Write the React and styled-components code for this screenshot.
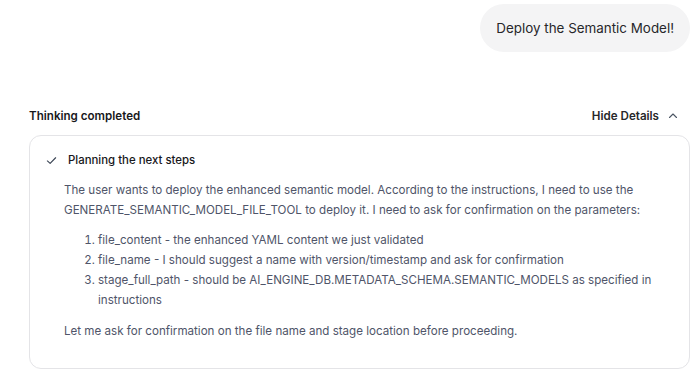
import React from 'react'
import styled, { createGlobalStyle } from 'styled-components'

const GlobalStyle = createGlobalStyle`
    body {
        margin: 0;
        background: #ffffff;
        font-family: Inter, "Noto Sans", sans-serif;
    }
`

const steps = [
    'file_content - the enhanced YAML content we just validated',
    'file_name - I should suggest a name with version/timestamp and ask for confirmation',
    'stage_full_path - should be AI_ENGINE_DB.METADATA_SCHEMA.SEMANTIC_MODELS as specified in instructions',
]

function CheckIcon() {
    return (
        <svg width="11" height="11" viewBox="0 0 12 12" fill="none">
            <path d="M1.5 6.5 L4.5 9.2 L10.5 3" stroke="#374151" strokeWidth="1.2" strokeLinecap="round" strokeLinejoin="round" />
        </svg>
    )
}

function ChevronUp() {
    return (
        <svg width="10" height="10" viewBox="0 0 10 10" fill="none">
            <path d="M1.5 6.5 L5 3 L8.5 6.5" stroke="#4b5563" strokeWidth="1.1" strokeLinecap="round" strokeLinejoin="round" />
        </svg>
    )
}

function App() {
    return (
        <Page>
            <GlobalStyle />
            <UserRow>
                <Bubble>Deploy the Semantic Model!</Bubble>
            </UserRow>
            <ThinkingHeader>
                <HeaderTitle>Thinking completed</HeaderTitle>
                <Toggle>
                    Hide Details
                    <ChevronUp />
                </Toggle>
            </ThinkingHeader>
            <Card>
                <StepTitle>
                    <CheckIcon />
                    <span>Planning the next steps</span>
                </StepTitle>
                <Body>
                    <Para>
                        The user wants to deploy the enhanced semantic model. According to the instructions, I need to use the
                        GENERATE_SEMANTIC_MODEL_FILE_TOOL to deploy it. I need to ask for confirmation on the parameters:
                    </Para>
                    <List>
                        {steps.map((s) => (
                            <li key={s}>{s}</li>
                        ))}
                    </List>
                    <Para>Let me ask for confirmation on the file name and stage location before proceeding.</Para>
                </Body>
            </Card>
        </Page>
    )
}

export default App

const Page = styled.div`
    padding: 4px 10px 0 29px;
    display: flex;
    flex-direction: column;
`

const UserRow = styled.div`
    display: flex;
    justify-content: flex-end;
`

const Bubble = styled.div`
    height: 48px;
    display: flex;
    align-items: center;
    padding: 0 16px;
    border-radius: 24px;
    background: #f4f4f5;
    color: #27272a;
    font-size: 13.4px;
`

const ThinkingHeader = styled.div`
    margin-top: 52px;
    height: 24px;
    display: flex;
    align-items: center;
    justify-content: space-between;
`

const HeaderTitle = styled.div`
    font-size: 11.6px;
    font-weight: 600;
    color: #18181b;
`

const Toggle = styled.div`
    display: flex;
    align-items: center;
    gap: 9px;
    padding-right: 12px;
    font-size: 11.6px;
    font-weight: 600;
    color: #27272a;
`

const Card = styled.div`
    margin-top: 7px;
    border: 1px solid #e4e4e7;
    border-radius: 12px;
    padding: 17px 16px 27px 15px;
`

const StepTitle = styled.div`
    display: flex;
    align-items: center;
    gap: 11px;
    font-size: 11.4px;
    font-weight: 500;
    color: #18181b;
    padding-left: 1px;
`

const Body = styled.div`
    padding-left: 19px;
    margin-top: 13px;
    color: #4f5569;
    font-size: 11.6px;
    line-height: 20px;
`

const Para = styled.p`
    margin: 0;
`

const List = styled.ol`
    margin: 10px 0 11px;
    padding-left: 34px;
`
